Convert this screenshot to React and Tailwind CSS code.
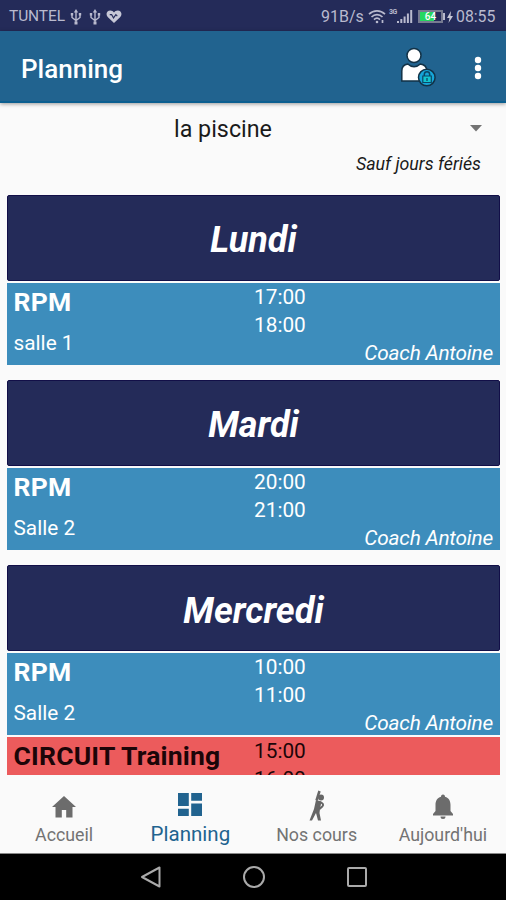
const days = [
  { name: "Lundi", room: "salle 1", start: "17:00", end: "18:00" },
  { name: "Mardi", room: "Salle 2", start: "20:00", end: "21:00" },
  { name: "Mercredi", room: "Salle 2", start: "10:00", end: "11:00" },
];

function Usb() {
  return (
    <svg width="12" height="16" viewBox="0 0 12 16" fill="none" stroke="#b9bace" strokeWidth="1.400">
      <path d="M6 2v12M2 5v3.500l4 3 4-3V5" />
      <path d="M6 0l2.200 3.500H3.800zM4.500 12.500h3v3h-3zM.8 4h2.400v2.500H.8zM8.800 4h2.400v2.500H8.800z" fill="#b9bace" stroke="none" />
    </svg>
  );
}

function StatusBar() {
  return (
    <div className="flex h-[31px] shrink-0 items-center bg-[#242b59] pt-[2px] pl-[9px] text-[15.5px] text-[#b9bace]">
      <span className="w-[61px] whitespace-nowrap tracking-[-0.1px]">TUNTEL</span>
      <span className="flex w-[19px]"><Usb /></span>
      <span className="flex w-[17px]"><Usb /></span>
      <svg width="16" height="15" viewBox="0 0 17 15">
        <path d="M8.500 14.500L1.800 8C-.8 4.700 1 1 4.500 1c1.800 0 3.200.9 4 2.200C9.300 1.900 10.700 1 12.500 1c3.500 0 5.300 3.700 2.700 7z" fill="#c6c7d6" />
        <path d="M4 5.500h2L8 9l2.500-3.500L12 7" fill="none" stroke="#242b59" strokeWidth="1.200" />
      </svg>
      <span className="ml-[199px] w-[47px] whitespace-nowrap text-[16px]">91B/s</span>
      <svg width="18" height="15" viewBox="0 0 18 15" fill="none" stroke="#b9bace" strokeWidth="1.700">
        <path d="M1 5.200c4.500-4.500 11.500-4.500 16 0M3.500 8c3.200-3.200 7.800-3.200 11 0M6 10.700c1.800-1.800 4.200-1.800 6 0" />
        <circle cx="9" cy="13" r="1.300" fill="#b9bace" stroke="none" />
        <path d="M14.500 11v3" />
      </svg>
      <span className="ml-[3px] -mt-[9px] w-[8px] text-[7px] font-bold tracking-[-0.5px]">3G</span>
      <svg width="16" height="15" viewBox="0 0 16 15" fill="#b9bace">
        <path d="M0 12h2v2H0zM3.300 10h2v4h-2zM6.600 7.500h2V14h-2zM9.900 4.500h2V14h-2zM13.200 1h2v13h-2z" />
      </svg>
      <span className="ml-[5px] flex h-[13px] w-[25px] items-center justify-center border-2 border-[#777b91] bg-[linear-gradient(90deg,#25d760_68%,#242b59_68%)] text-[10px] leading-none font-medium text-white">
        64
      </span>
      <span className="h-[7px] w-[2px] bg-[#b9bace]" />
      <svg className="ml-[2px]" width="6" height="12" viewBox="0 0 6 12">
        <path d="M4 0L0 7h2.500L1.500 12 6 5H3.500z" fill="#c6c7d6" />
      </svg>
      <span className="ml-[3px] whitespace-nowrap text-[15.800px]">08:55</span>
    </div>
  );
}

function AppBar() {
  return (
    <header className="z-10 flex h-[72px] shrink-0 items-center border-b-2 border-[#0b5f90] bg-[#21638f] pl-[21px] shadow-[0_1px_4px_rgba(0,0,0,0.4)]">
      <h1 className="mt-[7px] w-[378px] text-[26px] font-medium text-white">Planning</h1>
      <svg className="mt-[1px]" width="38" height="42" viewBox="0 0 38 42">
        <g stroke="#123247" strokeWidth="1.500">
          <circle cx="15" cy="9.500" r="7" fill="#fff" />
          <path d="M2.800 35V25c0-4.500 2-6.500 6-7 3.500 3.500 9 3.500 12.500 0 4.500.5 6.500 2.500 6.500 7v10z" fill="#fff" />
          <circle cx="27.800" cy="31.500" r="8.300" fill="#16a5d8" />
        </g>
        <path d="M25.300 30v-1.500a2.700 2.700 0 0 1 5.400 0V30" fill="none" stroke="#0b4666" strokeWidth="1.500" />
        <path d="M23.800 30h8.500v6.500h-8.500z" fill="#12c5cf" stroke="#0b4666" strokeWidth="1.200" />
        <path d="M28 32v3" stroke="#0b4666" strokeWidth="1.300" />
      </svg>
      <svg className="mt-[3px] ml-[37px]" width="8" height="24" viewBox="0 0 8 24" fill="#fff">
        <circle cx="4" cy="4" r="3.200" />
        <circle cx="4" cy="12" r="3.200" />
        <circle cx="4" cy="20" r="3.200" />
      </svg>
    </header>
  );
}

function Session({ title, room, start, end, coach, colors }) {
  return (
    <div className={`flex h-[82px] shrink-0 pr-[7px] pl-[6.500px] ${colors}`}>
      <div className="w-[240.500px] shrink-0 whitespace-nowrap">
        <div className="h-[39px] text-[26.500px] leading-[37px] font-bold tracking-[0.200px]">{title}</div>
        <div className="text-[20.800px] leading-[42px]">{room}</div>
      </div>
      <div className="pt-[1.500px] text-[20.800px] leading-[27.700px]">
        <div>{start}</div>
        <div>{end}</div>
      </div>
      <div className="ml-auto self-end text-[20.800px] leading-[23px] tracking-[-0.200px] italic">{coach}</div>
    </div>
  );
}

function Tab({ label, icon, active }) {
  return (
    <div className={`flex flex-1 flex-col items-center ${active ? "text-[#21638f]" : "text-[#737373]"}`}>
      <div className={`flex h-[36px] items-end justify-center ${active ? "mt-[10px]" : "mt-[12px]"}`}>{icon}</div>
      <div className={active ? "text-[20.500px] leading-[27px]" : "text-[17.800px] leading-[24px]"}>{label}</div>
    </div>
  );
}

export default function App() {
  return (
    <div className="flex h-[900px] w-[506px] flex-col overflow-hidden bg-[#fafafa] font-[Roboto,sans-serif] text-[#1a1a1a]">
      <StatusBar />
      <AppBar />
      <div className="flex h-[50px] shrink-0 items-center pl-[174px]">
        <span className="mt-[3px] w-[296px] text-[23.300px]">la piscine</span>
        <svg width="12" height="7" viewBox="0 0 12 7"><path d="M0 0h12L6 6.500z" fill="#737373" /></svg>
      </div>
      <div className="h-[42px] shrink-0 pr-[25px] text-right text-[17.800px] leading-[22px] italic">Sauf jours fériés</div>
      <main className="flex h-[580px] shrink-0 flex-col overflow-hidden pr-[6px] pl-[7px]">
        {days.map((d, i) => (
          <section key={d.name} className={`shrink-0 ${i < 2 ? "h-[185.200px]" : "h-[171.500px]"}`}>
            <h2 className="mb-[2px] flex h-[85.500px] items-center justify-center rounded-[2px] border border-[#120f48] bg-[#242b59] pt-[5px] text-[36px] font-bold text-white italic">
              {d.name}
            </h2>
            <Session title="RPM" room={d.room} start={d.start} end={d.end} coach="Coach Antoine" colors="bg-[#3d8dbc] text-white" />
          </section>
        ))}
        <Session title="CIRCUIT Training" start="15:00" end="16:00" colors="bg-[#ec5b5c] text-[#1c0508]" />
      </main>
      <nav className="flex h-[79px] shrink-0 border-b border-[#888] pl-[1px]">
        <Tab label="Accueil" icon={<svg width="26" height="30" viewBox="0 0 26 30" fill="#6c6c6c"><path d="M13 3L1 14h3.500v10.500h6.300V17h4.400v7.500h6.300V14H25z" /></svg>} />
        <Tab active label="Planning" icon={<svg width="24" height="28" viewBox="0 0 24 28" fill="#21638f"><path d="M0 0h10.800v13H0zM13.200 0H24v7.800H13.200zM0 15.800h10.800V23H0zM13.200 10.500H24V23H13.200z" /></svg>} />
        <Tab label="Nos cours" icon={
          <svg width="18" height="34" viewBox="0 0 18 34" fill="none" stroke="#666" strokeLinejoin="round">
            <path d="M11.500 2L8.500 11.500" strokeWidth="2.500" />
            <circle cx="13" cy="8.500" r="3" fill="#666" stroke="none" />
            <path d="M8 11l5.500 1.500L12 20l-.5 4 1.500 7.500h-3L8 24l-4 7.500H1.500L6 20z" fill="#666" stroke="none" />
            <path d="M12 13.200c3 .8 3.800 2.500 2.500 4L11.500 20" strokeWidth="2" />
          </svg>} />
        <Tab label="Aujourd'hui" icon={<svg width="22" height="30" viewBox="0 0 22 30" fill="#6c6c6c"><path d="M11 1.500c-1.400 0-2 1-2 2.200C5 4.800 3.500 8 3.500 12v6L1 21v1.500h20V21l-2.500-3v-6c0-4-1.500-7.200-5.500-8.300 0-1.200-.6-2.200-2-2.200zM8.500 23.500h5a2.500 2.500 0 0 1-5 0z" /></svg>} />
      </nav>
      <footer className="flex h-[46px] shrink-0 items-center justify-center bg-black">
        <div className="flex w-[227px] items-center justify-between">
          <svg className="ml-[1px]" width="20" height="22" viewBox="0 0 20 22" fill="none" stroke="#aaa" strokeWidth="2" strokeLinejoin="round"><path d="M18.500 1.500v19L1 11z" /></svg>
          <div className="size-[22px] rounded-full border-2 border-[#aaa]" />
          <div className="size-[20px] rounded-[2px] border-2 border-[#aaa]" />
        </div>
      </footer>
    </div>
  );
}
